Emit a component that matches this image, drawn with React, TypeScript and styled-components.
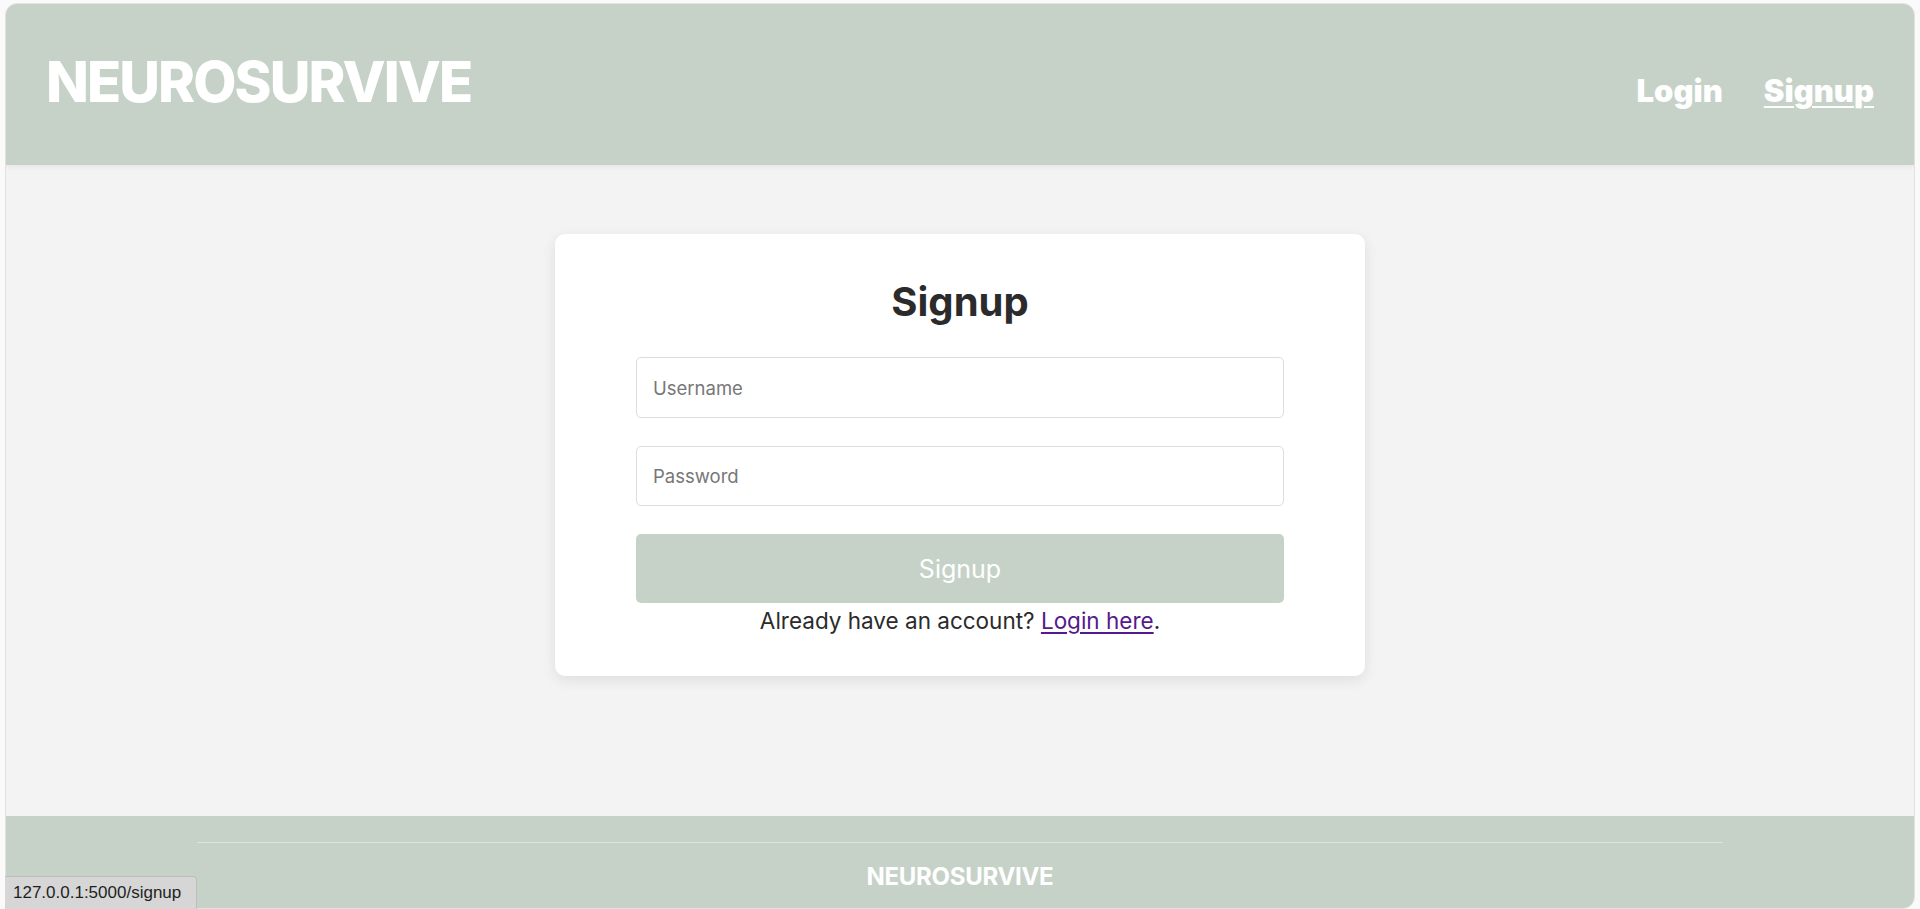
import React from "react";
import styled, { createGlobalStyle } from "styled-components";

const FONT = `"Inter", "Noto Sans", sans-serif`;

const GlobalStyle = createGlobalStyle`
  *, *::before, *::after { box-sizing: border-box; }
  html, body { margin: 0; padding: 0; }
  body {
    background: #fafafa;
    font-family: ${FONT};
    overflow: hidden;
  }
`;

const Frame = styled.div`
  margin: 3px 5px 0 5px;
  min-height: calc(100vh - 3px);
  display: flex;
  flex-direction: column;
  background: #f3f3f3;
  border: 1px solid #e2e2e2;
  border-radius: 12px;
  overflow: hidden;
`;

const Header = styled.header`
  height: 161px;
  flex: none;
  display: flex;
  align-items: baseline;
  justify-content: space-between;
  padding: 45px 40px 0 40px;
  background: #c6d2c8;
  box-shadow: 0 2px 5px rgba(0, 0, 0, 0.06);
  position: relative;
  z-index: 1;
`;

const Logo = styled.h1`
  margin: 0;
  font-family: ${FONT};
  font-weight: 800;
  font-size: 56px;
  line-height: 1.2;
  color: #ffffff;
  letter-spacing: -1.9px;
`;

const Nav = styled.nav`
  display: flex;
  align-items: baseline;
  gap: 41px;
`;

const NavLink = styled.a<{ $active?: boolean }>`
  font-family: ${FONT};
  font-weight: 900;
  font-size: 31px;
  color: #ffffff;
  text-decoration: ${(p) => (p.$active ? "underline" : "none")};
  text-decoration-thickness: 2px;
  text-underline-offset: 4px;
  letter-spacing: 0;
  cursor: pointer;
`;

const Main = styled.main`
  flex: 1;
  display: flex;
  justify-content: center;
  align-items: flex-start;
  padding-top: 69px;
`;

const Card = styled.section`
  width: 810px;
  background: #ffffff;
  border-radius: 10px;
  box-shadow: 0 4px 14px rgba(0, 0, 0, 0.09);
  padding: 44px 81px 40px;
  display: flex;
  flex-direction: column;
  align-items: stretch;
`;

const Title = styled.h2`
  margin: 0 0 31px;
  text-align: center;
  font-family: ${FONT};
  font-weight: 700;
  font-size: 40px;
  line-height: 48px;
  color: #2b2b2b;
`;

const Input = styled.input<{ $h?: number }>`
  display: block;
  width: 100%;
  height: ${(p) => p.$h ?? 60}px;
  margin: 0 0 28px;
  padding: 0 16px;
  border: 1px solid #dcdcdc;
  border-radius: 5px;
  background: #ffffff;
  font-family: ${FONT};
  font-size: 18.5px;
  color: #333;
  outline: none;
  &::placeholder {
    color: #777777;
  }
`;

const Button = styled.button`
  display: block;
  width: 100%;
  height: 69px;
  border: none;
  border-radius: 5px;
  background: #c6d2c8;
  color: #ffffff;
  font-family: ${FONT};
  font-size: 25px;
  font-weight: 400;
  cursor: pointer;
`;

const Note = styled.p`
  margin: 3px 0 0;
  text-align: center;
  font-family: ${FONT};
  font-size: 22.5px;
  line-height: 30px;
  color: #2b2b2b;
`;

const NoteLink = styled.a`
  color: #551a8b;
  text-decoration: underline;
  text-underline-offset: 3px;
`;

const Footer = styled.footer`
  flex: none;
  height: 92px;
  background: #c6d2c8;
  padding-top: 26px;
  display: flex;
  flex-direction: column;
  align-items: center;
`;

const Rule = styled.hr`
  width: 80%;
  margin: 0;
  border: none;
  border-top: 1px solid #dde5de;
`;

const FooterBrand = styled.div`
  margin-top: 20px;
  font-family: ${FONT};
  font-weight: 700;
  font-size: 24px;
  line-height: 28px;
  color: #ffffff;
  letter-spacing: -0.3px;
`;

const StatusBar = styled.div`
  position: fixed;
  left: 5px;
  bottom: 0;
  width: 192px;
  height: 33px;
  display: flex;
  align-items: center;
  padding-left: 8px;
  background: #d6d6d6;
  border: 1px solid #bdbdbd;
  border-bottom: none;
  border-left: none;
  border-top-right-radius: 4px;
  font-family: "Liberation Sans", Arial, sans-serif;
  font-size: 17px;
  color: #1f1f1f;
`;

export default function App() {
  return (
    <>
      <GlobalStyle />
      <Frame>
        <Header>
          <Logo>NEUROSURVIVE</Logo>
          <Nav>
            <NavLink>Login</NavLink>
            <NavLink $active>Signup</NavLink>
          </Nav>
        </Header>
        <Main>
          <Card>
            <Title>Signup</Title>
            <Input $h={61} placeholder="Username" />
            <Input type="password" placeholder="Password" />
            <Button>Signup</Button>
            <Note>
              Already have an account? <NoteLink>Login here</NoteLink>.
            </Note>
          </Card>
        </Main>
        <Footer>
          <Rule />
          <FooterBrand>NEUROSURVIVE</FooterBrand>
        </Footer>
      </Frame>
      <StatusBar>127.0.0.1:5000/signup</StatusBar>
    </>
  );
}
